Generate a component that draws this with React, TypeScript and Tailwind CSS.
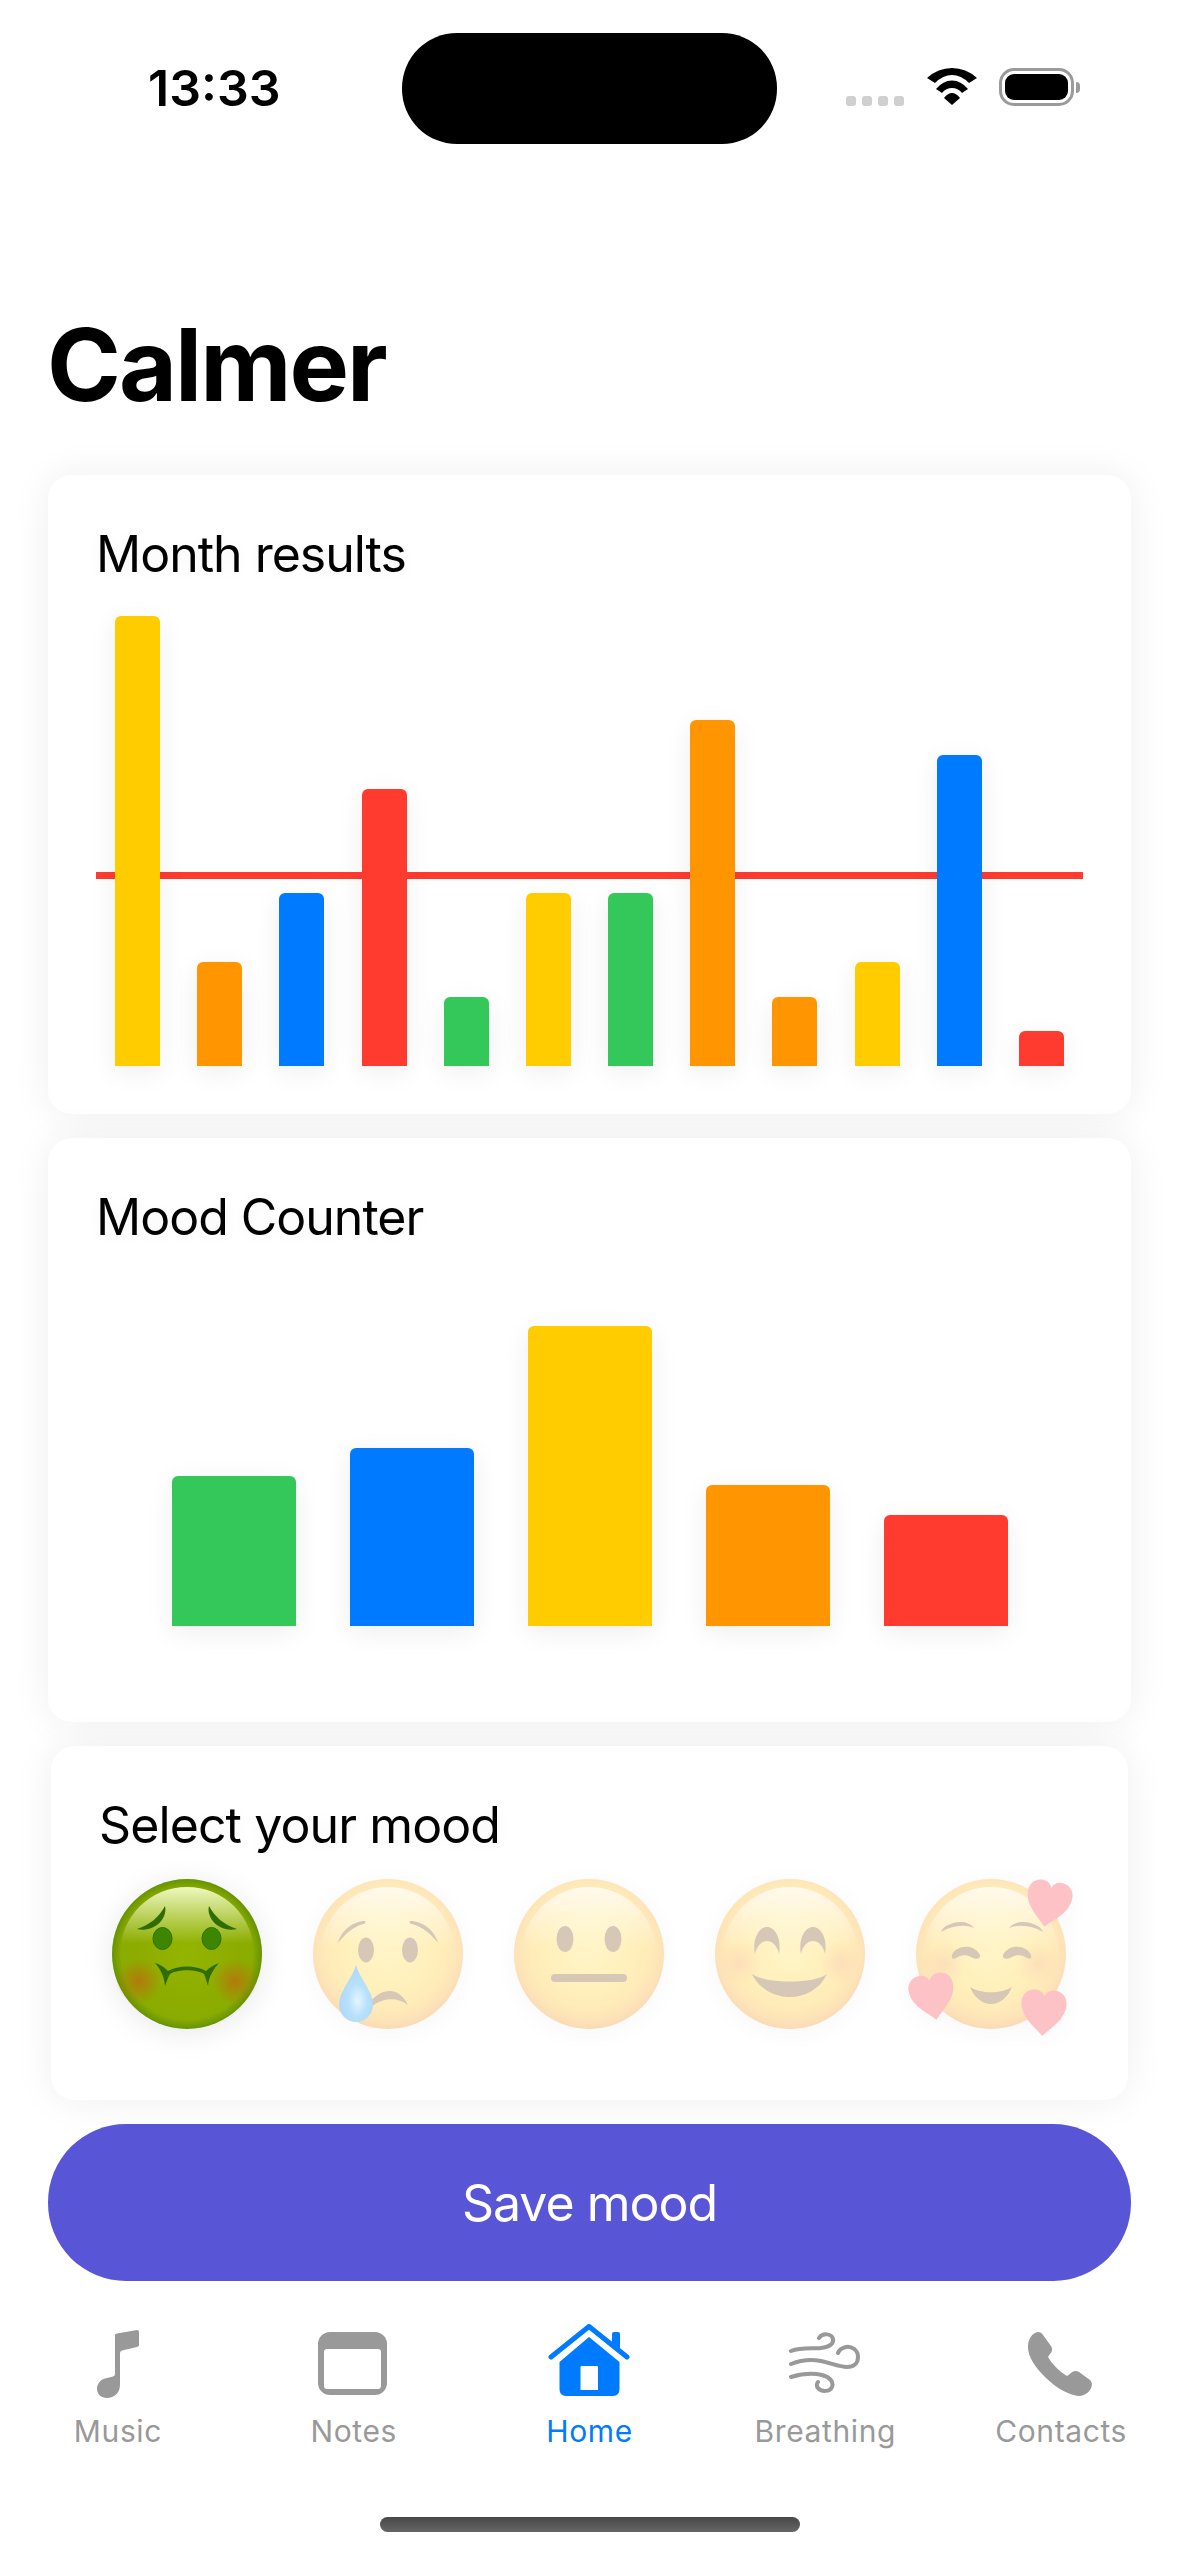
const font = { fontFamily: 'Inter, sans-serif' };

const monthBars = [
  { value: 13, color: 'bg-[#FFCC00]' },
  { value: 3, color: 'bg-[#FF9500]' },
  { value: 5, color: 'bg-[#007AFF]' },
  { value: 8, color: 'bg-[#FF3B30]' },
  { value: 2, color: 'bg-[#34C759]' },
  { value: 5, color: 'bg-[#FFCC00]' },
  { value: 5, color: 'bg-[#34C759]' },
  { value: 10, color: 'bg-[#FF9500]' },
  { value: 2, color: 'bg-[#FF9500]' },
  { value: 3, color: 'bg-[#FFCC00]' },
  { value: 9, color: 'bg-[#007AFF]' },
  { value: 1, color: 'bg-[#FF3B30]' },
];

const moodBars = [
  { height: 150, color: 'bg-[#34C759]' },
  { height: 178, color: 'bg-[#007AFF]' },
  { height: 300, color: 'bg-[#FFCC00]' },
  { height: 141, color: 'bg-[#FF9500]' },
  { height: 111, color: 'bg-[#FF3B30]' },
];

function FaceDefs({ id }: { id: string }) {
  return (
    <defs>
      <radialGradient id={`${id}-face`} cx="50%" cy="46%" r="56%">
        <stop offset="0%" stopColor="#ffe04f" />
        <stop offset="45%" stopColor="#ffd226" />
        <stop offset="70%" stopColor="#ffc218" />
        <stop offset="87%" stopColor="#fba416" />
        <stop offset="100%" stopColor="#e87c10" />
      </radialGradient>
      <linearGradient id={`${id}-cap`} x1="0" y1="0" x2="0" y2="1">
        <stop offset="0%" stopColor="#ffffff" stopOpacity="0.75" />
        <stop offset="45%" stopColor="#ffffff" stopOpacity="0" />
      </linearGradient>
      <radialGradient id={`${id}-cheek`}>
        <stop offset="0%" stopColor="#f5701a" stopOpacity="0.55" />
        <stop offset="100%" stopColor="#f5701a" stopOpacity="0" />
      </radialGradient>
    </defs>
  );
}

function Face({ id }: { id: string }) {
  return (
    <>
      <circle cx="75" cy="75" r="75" fill={`url(#${id}-face)`} />
      <circle cx="75" cy="75" r="67" fill={`url(#${id}-cap)`} />
    </>
  );
}

function Heart({ x, y, rotate }: { x: number; y: number; rotate: number }) {
  return (
    <path
      transform={`translate(${x} ${y}) rotate(${rotate} 22.5 23)`}
      d="M22.5 46C14 37 0 28 0 13C0 5 6 0 13 0C17.5 0 21 2.5 22.5 6.5C24 2.5 27.5 0 32 0C39 0 45 5 45 13C45 28 31 37 22.5 46Z"
      fill="#f83a44"
    />
  );
}

function SickEmoji() {
  return (
    <svg width="150" height="150" viewBox="0 0 150 150" className="overflow-visible drop-shadow-[0_4px_14px_rgba(0,0,0,0.09)]">
      <defs>
        <radialGradient id="sick-face" cx="50%" cy="50%" r="51%">
          <stop offset="0%" stopColor="#93b400" />
          <stop offset="86%" stopColor="#8aab00" />
          <stop offset="100%" stopColor="#5f9000" />
        </radialGradient>
        <linearGradient id="sick-cap" x1="0" y1="0" x2="0" y2="1">
          <stop offset="0%" stopColor="#eef8bf" />
          <stop offset="42%" stopColor="#eef8bf" stopOpacity="0" />
        </linearGradient>
        <radialGradient id="sick-cheek">
          <stop offset="0%" stopColor="#c2660f" stopOpacity="0.7" />
          <stop offset="100%" stopColor="#c2660f" stopOpacity="0" />
        </radialGradient>
      </defs>
      <circle cx="75" cy="75" r="75" fill="url(#sick-face)" />
      <circle cx="75" cy="75" r="67" fill="url(#sick-cap)" />
      <circle cx="27" cy="102" r="23" fill="url(#sick-cheek)" />
      <circle cx="123" cy="102" r="23" fill="url(#sick-cheek)" />
      <g fill="#2f6d00">
        <path d="M25 50C38 46 47 38 53 27C56 38 44 54 25 50Z" />
        <path d="M125 50C112 46 103 38 97 27C94 38 106 54 125 50Z" />
        <path d="M43 84C50 86 54 90 56 92C66 86 84 86 94 92C97 89 101 86 107 84C102 90 97 96 96 107C94 100 93 97 92 95C84 90 66 90 58 95C56 98 55 102 53 107C52 96 48 90 43 84Z" />
      </g>
      <ellipse cx="50.5" cy="59.5" rx="9.5" ry="11" fill="#3f8600" stroke="#2f6d00" strokeWidth="1" />
      <ellipse cx="99.5" cy="59.5" rx="9.5" ry="11" fill="#3f8600" stroke="#2f6d00" strokeWidth="1" />
    </svg>
  );
}

function CryEmoji() {
  return (
    <svg width="150" height="150" viewBox="0 0 150 150" className="overflow-visible opacity-30 drop-shadow-[0_4px_14px_rgba(0,0,0,0.12)]">
      <FaceDefs id="cry" />
      <radialGradient id="cry-tear" cx="55%" cy="62%" r="58%">
        <stop offset="0%" stopColor="#a8e4ff" />
        <stop offset="50%" stopColor="#149cf5" />
        <stop offset="100%" stopColor="#0080e8" />
      </radialGradient>
      <Face id="cry" />
      <g fill="#7a4a10">
        <path d="M25 64C28 52 40 42 52 42C53 44 52 45 50 45C40 48 32 55 25 64Z" />
        <path d="M125 64C122 52 110 42 97 42C96 44 97 45 99 45C110 48 118 55 125 64Z" />
        <ellipse cx="53" cy="71" rx="8" ry="12.5" />
        <ellipse cx="97" cy="71" rx="8" ry="12.5" />
        <path d="M58 122C68 110 85 106 95 126C85 118 70 118 58 128Z" />
      </g>
      <path d="M43 86C47 100 60 112 60 126A17 17 0 0 1 26 126C26 112 39 100 43 86Z" fill="url(#cry-tear)" />
    </svg>
  );
}

function NeutralEmoji() {
  return (
    <svg width="150" height="150" viewBox="0 0 150 150" className="overflow-visible opacity-30 drop-shadow-[0_4px_14px_rgba(0,0,0,0.12)]">
      <FaceDefs id="neutral" />
      <Face id="neutral" />
      <g fill="#7a4a10">
        <ellipse cx="51" cy="60" rx="8.5" ry="13" />
        <ellipse cx="99" cy="60" rx="8.5" ry="13" />
        <rect x="37" y="95" width="76" height="8" rx="4" />
      </g>
    </svg>
  );
}

function SmileEmoji() {
  return (
    <svg width="150" height="150" viewBox="0 0 150 150" className="overflow-visible opacity-30 drop-shadow-[0_4px_14px_rgba(0,0,0,0.12)]">
      <FaceDefs id="smile" />
      <Face id="smile" />
      <circle cx="25" cy="84" r="22" fill="url(#smile-cheek)" />
      <circle cx="125" cy="84" r="22" fill="url(#smile-cheek)" />
      <g fill="#7a4a10">
        <path d="M40 75C37 58 45 48 52 48C59 48 67 58 64 75C62 66 57 62 52 62C47 62 42 66 40 75Z" />
        <path d="M86 75C83 58 91 48 98 48C105 48 113 58 110 75C108 66 103 62 98 62C93 62 88 66 86 75Z" />
        <path d="M37 95C50 105 100 105 112 95C105 110 90 118 75 118C60 118 44 110 37 95Z" />
      </g>
    </svg>
  );
}

function LoveEmoji() {
  return (
    <svg width="150" height="150" viewBox="0 0 150 150" className="overflow-visible opacity-30 drop-shadow-[0_4px_14px_rgba(0,0,0,0.12)]">
      <FaceDefs id="love" />
      <Face id="love" />
      <circle cx="28" cy="85" r="22" fill="url(#love-cheek)" />
      <circle cx="122" cy="85" r="22" fill="url(#love-cheek)" />
      <g fill="#7a4a10">
        <path d="M25 53C28 44 50 38 58 49C50 45 36 46 25 53Z" />
        <path d="M127 53C124 44 102 38 93 49C102 45 116 46 127 53Z" />
        <path d="M36 76C40 66 58 64 64 76C65 80 60 81 55 78C50 75 44 76 40 79C37 81 35 79 36 76Z" />
        <path d="M115 76C111 66 93 64 87 76C86 80 91 81 96 78C101 75 107 76 111 79C114 81 116 79 115 76Z" />
        <path d="M54 108C65 115 85 115 96 108C92 118 84 125 75 125C66 125 58 118 54 108Z" />
      </g>
      <Heart x={110} y={2} rotate={10} />
      <Heart x={-6} y={95} rotate={-10} />
      <Heart x={105} y={111} rotate={3} />
    </svg>
  );
}

function MusicIcon() {
  return (
    <svg width="42" height="68" viewBox="0 0 42 68" className="mt-[6px]" fill="#999999">
      <path d="M18 5Q18 4 20 3.6L40 0Q42 0 42 2L42 15Q42 16.5 40 17L25 20.5Q23 21 23 23L23 55C23 63 17 68 10 68C4 68 0 64 0 59C0 53 4 49 10 48L16 46.5Q18 46 18 44Z" />
    </svg>
  );
}

function NotesIcon() {
  return (
    <svg width="69" height="63" viewBox="0 0 69 63" className="mt-[8px] -ml-[2px]" fill="#999999">
      <path
        fillRule="evenodd"
        d="M12 0H57A12 12 0 0 1 69 12V51A12 12 0 0 1 57 63H12A12 12 0 0 1 0 51V12A12 12 0 0 1 12 0ZM9 17A3 3 0 0 0 6 20V54A3 3 0 0 0 9 57H60A3 3 0 0 0 63 54V20A3 3 0 0 0 60 17Z"
      />
    </svg>
  );
}

function HomeIcon() {
  return (
    <svg width="82" height="72" viewBox="0 0 82 72">
      <path d="M64 22V10Q64 8 66 8H70Q72 8 72 10V24Z" fill="#007AFF" />
      <path d="M3 33L41 2.5L79 33" fill="none" stroke="#007AFF" strokeWidth="5" strokeLinecap="round" strokeLinejoin="round" />
      <path
        fillRule="evenodd"
        d="M41 13L71.5 38V65Q71.5 72 65 72H18Q11.5 72 11.5 65V38ZM33.5 42Q32.5 42 32.5 43V66H50V43Q50 42 49 42Z"
        fill="#007AFF"
      />
    </svg>
  );
}

function WindIcon() {
  return (
    <svg width="71" height="61" viewBox="0 0 71 61" className="mt-[8px] -ml-[2px]" fill="none" stroke="#999999" strokeWidth="4" strokeLinecap="round">
      <path d="M2 19C12 15 24 17 32 16C40 15 45 12 44 7C43 2 34 0 30 6" />
      <path d="M2 32C12 28 22 27 32 29C42 31 50 35 58 35C65 35 69 31 69 25C69 18 63 14 57 15C53 16 50 18 49 21" />
      <path d="M2 45C12 42 24 41 33 43C41 45 45 50 43 55C41 60 32 60 29 56C27 54 28 51 29 50" />
    </svg>
  );
}

function PhoneIcon() {
  return (
    <svg width="64" height="64" viewBox="0 0 64 64" className="mt-[8px] -ml-[2px]" fill="#999999">
      <path d="M10 0C12 0 14 1 15 3L23 14C25 17 24 20 22 22L20 25C24 32 31 39 39 44L43 41C45 39 48 38 51 40L62 48C65 51 64 55 62 58C59 62 55 64 50 64C38 62 26 54 17 45C7 35 0 25 0 15C0 7 4 1 10 0Z" />
    </svg>
  );
}

const tabs = [
  { label: 'Music', icon: <MusicIcon />, active: false },
  { label: 'Notes', icon: <NotesIcon />, active: false },
  { label: 'Home', icon: <HomeIcon />, active: true },
  { label: 'Breathing', icon: <WindIcon />, active: false },
  { label: 'Contacts', icon: <PhoneIcon />, active: false },
];

function StatusBar() {
  return (
    <div className="flex pt-[33px] h-[305px]">
      <div className="w-[402px] pl-[148px] pt-[25px] text-[50px] leading-[60px] font-semibold text-black">
        13:33
      </div>
      <div className="w-[375px] h-[111px] rounded-[55px] bg-black" />
      <div className="flex items-start pl-[69px] pt-[35px]">
        <div className="flex gap-[6px] mt-[28px] mr-[23px]">
          <div className="w-[10px] h-[10px] rounded-[3px] bg-[#cfcfcf]" />
          <div className="w-[10px] h-[10px] rounded-[3px] bg-[#cfcfcf]" />
          <div className="w-[10px] h-[10px] rounded-[3px] bg-[#cfcfcf]" />
          <div className="w-[10px] h-[10px] rounded-[3px] bg-[#cfcfcf]" />
        </div>
        <svg width="50" height="37" viewBox="0 0 50 37" className="mr-[22px]" fill="#000000">
          <path d="M0 10Q11 0 25 0Q39 0 50 10L42 15Q34 7 25 7Q16 7 8 15Z" />
          <path d="M9 21Q16 12.5 25 12.5Q34 12.5 41 21L35 25Q31 20 25 20Q19 20 15 25Z" />
          <path d="M17 30Q21 25 25 25Q29 25 33 30L25 37Z" />
        </svg>
        <div className="flex items-center">
          <div className="w-[75px] h-[38px] rounded-[15px] border-[3px] border-[#9a9a9a] p-[3px]">
            <div className="w-full h-full rounded-[9px] bg-black" />
          </div>
          <div className="ml-[2px] w-[4px] h-[11px] rounded-r-[4px] bg-[#9a9a9a]" />
        </div>
      </div>
    </div>
  );
}

export default function App() {
  return (
    <div className="w-[1179px] h-[2556px] bg-white overflow-hidden text-black" style={font}>
      <StatusBar />

      <h1 className="pl-[47px] text-[100px] leading-[120px] font-bold tracking-[-2px] mb-[50px]">Calmer</h1>

      <div className="mx-[48px] flex flex-col gap-[24px]">
        <section className="rounded-[24px] bg-white shadow-[0_0_40px_rgba(0,0,0,0.065)] pt-[49px] pb-[48px]">
          <h2 className="pl-[48px] text-[50px] leading-[60px] tracking-[-1px] [text-shadow:0_2px_14px_rgba(0,0,0,0.05)]">Month results</h2>
          <div className="relative mt-[32px] mx-[48px] px-[19px] h-[450px] flex items-end justify-between">
            <div className="absolute left-0 right-0 bottom-[187px] h-[7px] bg-[#FF3B30]" />
            {monthBars.map((bar, i) => (
              <div
                key={i}
                className={`relative w-[45px] rounded-t-[6px] shadow-[0_6px_28px_rgba(0,0,0,0.07)] ${bar.color}`}
                style={{ height: bar.value * 34.6 }}
              />
            ))}
          </div>
        </section>

        <section className="rounded-[24px] bg-white shadow-[0_0_40px_rgba(0,0,0,0.065)] pt-[49px] pb-[96px]">
          <h2 className="pl-[48px] text-[50px] leading-[60px] tracking-[-1px] [text-shadow:0_2px_14px_rgba(0,0,0,0.05)]">Mood Counter</h2>
          <div className="h-[379px] flex items-end justify-center gap-[54px]">
            {moodBars.map((bar, i) => (
              <div
                key={i}
                className={`w-[124px] rounded-t-[6px] shadow-[0_6px_28px_rgba(0,0,0,0.07)] ${bar.color}`}
                style={{ height: bar.height }}
              />
            ))}
          </div>
        </section>

        <section className="mx-[3px] rounded-[24px] bg-white shadow-[0_0_40px_rgba(0,0,0,0.065)] pt-[49px] pb-[71px]">
          <h2 className="pl-[48px] text-[50px] leading-[60px] tracking-[-0.9px] [text-shadow:0_2px_14px_rgba(0,0,0,0.05)]">Select your mood</h2>
          <div className="mt-[24px] pl-[61px] flex gap-[51px]">
            <SickEmoji />
            <CryEmoji />
            <NeutralEmoji />
            <SmileEmoji />
            <LoveEmoji />
          </div>
        </section>

        <button className="h-[157px] rounded-[78px] bg-[#5856D6] text-white text-[50px] leading-[60px] tracking-[-1px]">Save mood</button>
      </div>

      <nav className="grid grid-cols-5 pt-[43px]">
        {tabs.map((tab) => (
          <div key={tab.label} className="flex flex-col items-center">
            <div className="h-[76px] flex items-start justify-center">{tab.icon}</div>
            <span
              className={`mt-[13px] text-[30px] leading-[36px] tracking-[0.6px] ${tab.active ? 'text-[#007AFF]' : 'text-[#999999]'}`}
            >
              {tab.label}
            </span>
          </div>
        ))}
      </nav>

      <div className="mt-[68px] mx-auto w-[420px] h-[15px] rounded-full bg-gradient-to-b from-[#474747] to-[#666666]" />
    </div>
  );
}
